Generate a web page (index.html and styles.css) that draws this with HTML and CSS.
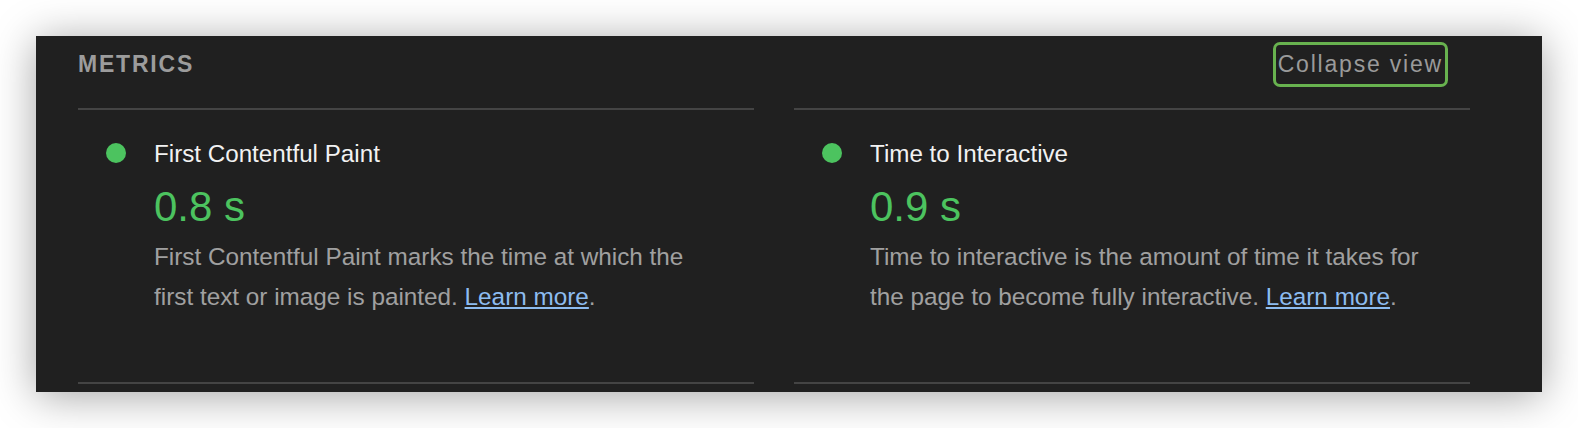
FILE: index.html
```html
<!DOCTYPE html>
<html lang="en">
<head>
<meta charset="utf-8">
<title>Metrics</title>
<link rel="stylesheet" href="styles.css">
</head>
<body>
<section class="panel">
  <header class="panel-header">
    <h2 class="panel-title">Metrics</h2>
    <button class="toggle" type="button">Collapse view</button>
  </header>
  <div class="metrics">
    <div class="metric">
      <span class="dot"></span>
      <div class="metric-body">
        <div class="metric-title">First Contentful Paint</div>
        <div class="metric-value">0.8 s</div>
        <p class="metric-desc">First Contentful Paint marks the time at which the first text or image is painted. <a href="#">Learn more</a>.</p>
      </div>
    </div>
    <div class="metric">
      <span class="dot"></span>
      <div class="metric-body">
        <div class="metric-title">Time to Interactive</div>
        <div class="metric-value">0.9 s</div>
        <p class="metric-desc">Time to interactive is the amount of time it takes for the page to become fully interactive. <a href="#">Learn more</a>.</p>
      </div>
    </div>
  </div>
</section>
</body>
</html>
```
FILE: styles.css
```css
html, body {
  margin: 0;
  padding: 0;
  background: #ffffff;
}

body {
  font-family: "Liberation Sans", Arial, sans-serif;
  padding: 36px 0 0 36px;
  height: 428px;
  box-sizing: border-box;
}

.panel {
  width: 1506px;
  height: 356px;
  box-sizing: border-box;
  background: #202020;
  padding: 0 72px 0 42px;
  box-shadow: 0 4px 40px rgba(0, 0, 0, 0.36);
}

.panel-header {
  height: 72px;
  box-sizing: border-box;
  padding-top: 5.5px;
  display: flex;
  align-items: baseline;
  justify-content: space-between;
}

.panel-title {
  margin: 0;
  font-size: 23px;
  line-height: 28px;
  font-weight: bold;
  letter-spacing: 1.8px;
  text-transform: uppercase;
  color: #9c9c9c;
}

.toggle {
  margin-right: 22px;
  height: 45px;
  box-sizing: border-box;
  border: 3px solid #68b24f;
  border-radius: 7px;
  background: transparent;
  padding: 0 2px 0 2px;
  font-family: inherit;
  font-size: 23px;
  line-height: 39px;
  letter-spacing: 1.8px;
  color: #9a9a9a;
}

.metrics {
  display: grid;
  grid-template-columns: 676px 676px;
  column-gap: 40px;
}

.metric {
  display: flex;
  gap: 28px;
  height: 276px;
  box-sizing: border-box;
  border-top: 2px solid #444444;
  border-bottom: 2px solid #444444;
  padding: 33px 0 0 28px;
}

.dot {
  flex: none;
  width: 20px;
  height: 20px;
  border-radius: 50%;
  background: #4cc35f;
}

.metric-body {
  margin-top: -3.3px;
}

.metric-title {
  font-size: 24.2px;
  line-height: 28px;
  color: #f2f2f2;
}

.metric-value {
  margin-top: 14px;
  font-size: 42px;
  line-height: 50px;
  color: #4cc35f;
}

.metric-desc {
  margin: 5.4px 0 0 0;
  max-width: 565px;
  font-size: 24.3px;
  line-height: 40px;
  color: #a0a0a0;
}

.metric-desc a {
  color: #8dbcf0;
  text-decoration: underline;
}
```
